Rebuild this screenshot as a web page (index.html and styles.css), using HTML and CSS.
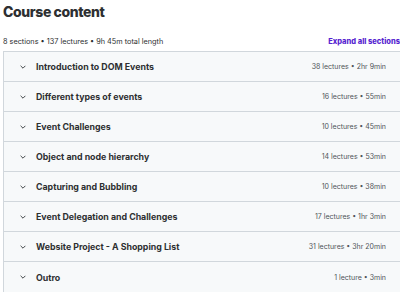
FILE: index.html
```html
<!DOCTYPE html>
<html lang="en">

<head>
    <meta charset="UTF-8">
    <meta name="viewport" content="width=device-width, initial-scale=1.0">
    <title>Course content</title>
    <link rel="stylesheet" href="styles.css">
</head>

<body>

    <div class="content">
        <h2 class="content__title">Course content</h2>

        <div class="content__bar">
            <span class="content__meta">8 sections &bull; 137 lectures &bull; 9h 45m total length</span>
            <button class="content__expand">Expand all sections</button>
        </div>

        <ul class="sections">
            <li class="section">
                <span class="section__chevron"><svg viewBox="0 0 10 6" width="6" height="4"><path d="M1 1l4 4 4-4" fill="none" stroke="currentColor" stroke-width="1.6"/></svg></span>
                <span class="section__title">Introduction to DOM Events</span>
                <span class="section__info">38 lectures &bull; 2hr 9min</span>
            </li>
            <li class="section">
                <span class="section__chevron"><svg viewBox="0 0 10 6" width="6" height="4"><path d="M1 1l4 4 4-4" fill="none" stroke="currentColor" stroke-width="1.6"/></svg></span>
                <span class="section__title">Different types of events</span>
                <span class="section__info">16 lectures &bull; 55min</span>
            </li>
            <li class="section">
                <span class="section__chevron"><svg viewBox="0 0 10 6" width="6" height="4"><path d="M1 1l4 4 4-4" fill="none" stroke="currentColor" stroke-width="1.6"/></svg></span>
                <span class="section__title">Event Challenges</span>
                <span class="section__info">10 lectures &bull; 45min</span>
            </li>
            <li class="section">
                <span class="section__chevron"><svg viewBox="0 0 10 6" width="6" height="4"><path d="M1 1l4 4 4-4" fill="none" stroke="currentColor" stroke-width="1.6"/></svg></span>
                <span class="section__title">Object and node hierarchy</span>
                <span class="section__info">14 lectures &bull; 53min</span>
            </li>
            <li class="section">
                <span class="section__chevron"><svg viewBox="0 0 10 6" width="6" height="4"><path d="M1 1l4 4 4-4" fill="none" stroke="currentColor" stroke-width="1.6"/></svg></span>
                <span class="section__title">Capturing and Bubbling</span>
                <span class="section__info">10 lectures &bull; 38min</span>
            </li>
            <li class="section">
                <span class="section__chevron"><svg viewBox="0 0 10 6" width="6" height="4"><path d="M1 1l4 4 4-4" fill="none" stroke="currentColor" stroke-width="1.6"/></svg></span>
                <span class="section__title">Event Delegation and Challenges</span>
                <span class="section__info">17 lectures &bull; 1hr 3min</span>
            </li>
            <li class="section">
                <span class="section__chevron"><svg viewBox="0 0 10 6" width="6" height="4"><path d="M1 1l4 4 4-4" fill="none" stroke="currentColor" stroke-width="1.6"/></svg></span>
                <span class="section__title">Website Project - A Shopping List</span>
                <span class="section__info">31 lectures &bull; 3hr 20min</span>
            </li>
            <li class="section">
                <span class="section__chevron"><svg viewBox="0 0 10 6" width="6" height="4"><path d="M1 1l4 4 4-4" fill="none" stroke="currentColor" stroke-width="1.6"/></svg></span>
                <span class="section__title">Outro</span>
                <span class="section__info">1 lecture &bull; 3min</span>
            </li>
        </ul>
    </div>

</body>

</html>
```

FILE: styles.css
```css
/* reset */
html {
    box-sizing: border-box;
}

*,
*:before,
*:after {
    box-sizing: inherit;
}

body,
h2,
ul {
    margin: 0;
    padding: 0;
}

ul {
    list-style: none;
}

body {
    font-family: "Inter", "Liberation Sans", sans-serif;
    color: #2d2f31;
    background: #fff;
    overflow: hidden;
}

.content {
    padding: 2px 0 0 3px;
    width: 420px;
}

.content__title {
    font-size: 14px;
    font-weight: 800;
    line-height: 20px;
    letter-spacing: -0.4px;
}

.content__bar {
    display: flex;
    justify-content: space-between;
    align-items: center;
    margin-top: 10px;
    height: 19px;
    padding-right: 20px;
}

.content__meta {
    font-size: 7.3px;
    color: #2d2f31;
}

.content__expand {
    border: none;
    background: none;
    padding: 0;
    font-family: inherit;
    font-size: 7.5px;
    font-weight: 800;
    color: #5624d0;
}

.sections {
    border: 1px solid #d1d7dc;
    border-right: none;
}

.section {
    display: flex;
    align-items: center;
    height: 30px;
    background: #f7f9fa;
    border-bottom: 1px solid #d1d7dc;
    padding: 0 34px 0 16px;
}

.section:last-child {
    border-bottom: none;
}

.section__chevron {
    display: flex;
    width: 16px;
    color: #3e4143;
}

.section__title {
    flex: 1;
    font-size: 8.8px;
    font-weight: 700;
}

.section__info {
    font-size: 7px;
    color: #4f5458;
}
```
